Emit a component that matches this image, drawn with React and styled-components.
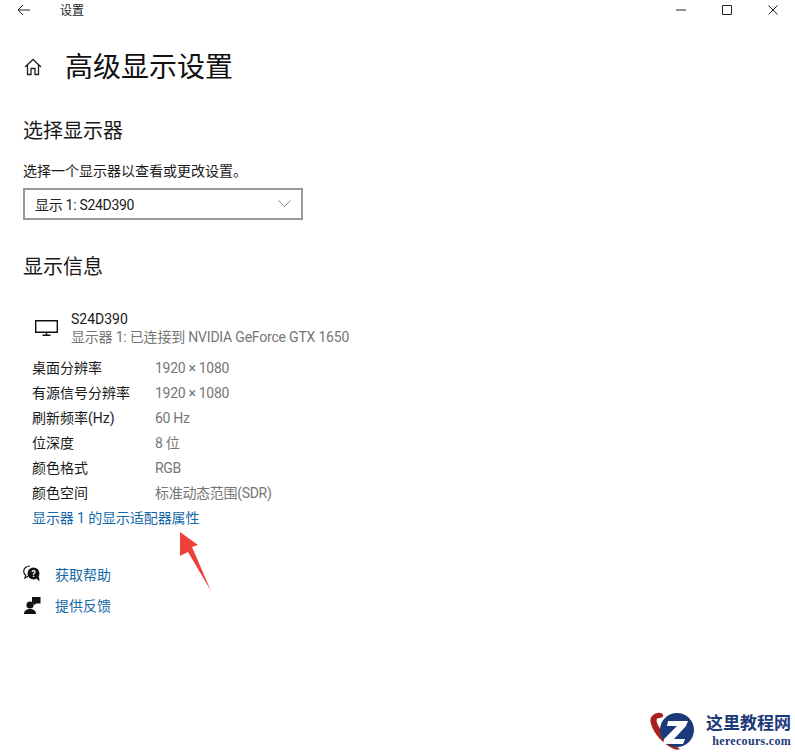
import React from 'react';
import styled, { createGlobalStyle } from 'styled-components';

const GlobalStyle = createGlobalStyle`
  html, body {
    margin: 0;
    padding: 0;
    background: #fff;
  }
  body {
    font-family: Roboto, "Noto Sans CJK SC", sans-serif;
    color: #1a1a1a;
  }
`;

const Page = styled.div`
  position: relative;
  width: 795px;
  height: 752px;
  overflow: hidden;
  background: #fff;
`;

const TitleBar = styled.header`
  display: flex;
  align-items: center;
  height: 20px;
  padding-left: 17px;
`;

const BackButton = styled.span`
  display: flex;
  width: 43px;
`;

const AppName = styled.span`
  padding-top: 2px;
  font-size: 12px;
  line-height: 18px;
  color: #222;
`;

const WindowControls = styled.div`
  display: flex;
  align-items: center;
  gap: 36px;
  margin-left: auto;
  padding-right: 17px;
`;

const Content = styled.main`
  padding: 27px 0 0 23px;
`;

const PageHeader = styled.div`
  display: flex;
  align-items: center;
  height: 40px;
  gap: 23px;
  margin-left: 1px;
`;

const PageTitle = styled.h1`
  margin: 0;
  padding-top: 2px;
  font-size: 28px;
  line-height: 38px;
  font-weight: 400;
  color: #111;
`;

const SectionTitle = styled.h2`
  margin: ${(p) => p.$top}px 0 0;
  font-size: 20px;
  line-height: 28px;
  font-weight: 400;
  color: #1a1a1a;
`;

const Hint = styled.p`
  margin: 16px 0 0;
  font-size: 14px;
  line-height: 20px;
  color: #1a1a1a;
`;

const Select = styled.div`
  box-sizing: border-box;
  display: flex;
  align-items: center;
  justify-content: space-between;
  width: 280px;
  height: 32px;
  margin-top: 7px;
  padding: 0 10px 1px;
  border: 2px solid #999;
  font-size: 14px;
  letter-spacing: -0.3px;
  color: #222;
`;

const DisplayCard = styled.div`
  display: flex;
  align-items: center;
  gap: 13px;
  margin: 29px 0 0 12px;
`;

const CardText = styled.div`
  font-size: 14px;
  line-height: 18px;
`;

const CardSub = styled.div`
  letter-spacing: -0.2px;
  color: #767676;
`;

const InfoList = styled.dl`
  margin: 10px 0 0 9px;
  font-size: 14px;
  line-height: 25px;
`;

const InfoRow = styled.div`
  display: flex;
`;

const InfoLabel = styled.dt`
  width: 123px;
  color: #1a1a1a;
`;

const InfoValue = styled.dd`
  margin: 0;
  letter-spacing: -0.3px;
  color: #767676;
`;

const AdapterLink = styled.a`
  display: block;
  margin-left: 9px;
  font-size: 14px;
  line-height: 25px;
  letter-spacing: -0.1px;
  color: #1568a8;
`;

const HelpList = styled.div`
  display: flex;
  flex-direction: column;
  gap: 11px;
  margin-top: 33px;
`;

const HelpRow = styled.div`
  display: flex;
  align-items: center;
  gap: 14px;
  height: 20px;
  font-size: 14px;
  color: #1568a8;
`;

const Annotation = styled.svg`
  position: absolute;
  left: 175px;
  top: 528px;
`;

const Watermark = styled.div`
  position: absolute;
  left: 649px;
  top: 711px;
  display: flex;
  align-items: flex-start;
  gap: 7px;
  white-space: nowrap;
`;

const MarkText = styled.div`
  display: flex;
  flex-direction: column;
  align-items: flex-end;
  font-family: "Noto Sans CJK SC", sans-serif;
`;

const MarkName = styled.span`
  font-size: 17px;
  line-height: 22px;
  font-weight: 700;
  color: #1c3a7a;
`;

const MarkUrl = styled.span`
  margin-top: 1px;
  font-family: "Liberation Serif", serif;
  font-size: 12px;
  line-height: 14px;
  font-weight: 700;
  letter-spacing: 0.3px;
  color: #1c3a7a;
`;

const infoRows = [
  ['桌面分辨率', '1920 × 1080'],
  ['有源信号分辨率', '1920 × 1080'],
  ['刷新频率(Hz)', '60 Hz'],
  ['位深度', '8 位'],
  ['颜色格式', 'RGB'],
  ['颜色空间', '标准动态范围(SDR)'],
];

function BackIcon() {
  return (
    <svg width="13" height="12" viewBox="0 0 13 12" fill="none" stroke="#222" strokeWidth="1">
      <path d="M13 6H1M6 1 1 6l5 5" />
    </svg>
  );
}

function HomeIcon() {
  return (
    <svg width="18" height="18" viewBox="0 0 18 18" fill="none" stroke="#222" strokeWidth="1.3">
      <path d="M1 9 9 1.500 17 9M3.500 7v9.500h3.500v-6h4v6h3.500V7" />
    </svg>
  );
}

function MonitorIcon() {
  return (
    <svg width="23" height="16" viewBox="0 0 23 16" fill="none" stroke="#111" strokeWidth="1.4">
      <path d="M.7.7h21.600v11.600H.7zM11.500 12.300v3M7.500 15.300h8" />
    </svg>
  );
}

function HelpIcon() {
  return (
    <svg width="18" height="18" viewBox="0 0 18 18">
      <path d="M7 1C3.400 1 .7 3.300.7 6.300c0 1.600.8 3 2 4L2 13l3.200-1.800" fill="none" stroke="#111" strokeWidth="1.2" />
      <circle cx="10.500" cy="8.500" r="6" fill="#111" />
      <path d="M13 13l3.500 3.500-.5-5z" fill="#111" />
      <text x="10.500" y="11.500" fontSize="8.500" fontWeight="700" fill="#fff" textAnchor="middle">?</text>
    </svg>
  );
}

function FeedbackIcon() {
  return (
    <svg width="18" height="18" viewBox="0 0 18 18" fill="#111">
      <circle cx="7" cy="9" r="3.600" />
      <path d="M1 18c0-3.400 2.600-5 6-5s6 1.600 6 5z" />
      <path d="M9 1h8.500v6.500H13L10.800 9.500V7.500H9z" />
    </svg>
  );
}

function LogoIcon() {
  return (
    <svg width="50" height="40" viewBox="0 0 50 40">
      <path d="M3 5c4-4 10-4 11-1 1 2-2 3-4 3-3 0-3 3-1 7 4 9 12 18 22 24-2 1-4 1-6 0C14 33 5 23 2 13 1 10 1 7 3 5z" fill="#a8201f" />
      <circle cx="28" cy="19" r="17" fill="#1c3a7a" />
      <path d="M19 10h20l-2 5-12 13h11l-2 5H14l1-5 13-13h-10z" fill="#fff" />
    </svg>
  );
}

export default function App() {
  return (
    <Page>
      <GlobalStyle />
      <TitleBar>
        <BackButton><BackIcon /></BackButton>
        <AppName>设置</AppName>
        <WindowControls>
          <svg width="10" height="10" viewBox="0 0 10 10" stroke="#222" fill="none"><path d="M0 5h10" /></svg>
          <svg width="10" height="10" viewBox="0 0 10 10" stroke="#222" fill="none"><path d="M.5.5h9v9h-9z" /></svg>
          <svg width="10" height="10" viewBox="0 0 10 10" stroke="#222" fill="none"><path d="M.5.5l9 9M9.500.5l-9 9" /></svg>
        </WindowControls>
      </TitleBar>

      <Content>
        <PageHeader>
          <HomeIcon />
          <PageTitle>高级显示设置</PageTitle>
        </PageHeader>

        <SectionTitle $top={30}>选择显示器</SectionTitle>
        <Hint>选择一个显示器以查看或更改设置。</Hint>
        <Select>
          显示 1: S24D390
          <svg width="13" height="7" viewBox="0 0 13 7" fill="none" stroke="#888"><path d="M.5.5l6 6 6-6" /></svg>
        </Select>

        <SectionTitle $top={33}>显示信息</SectionTitle>
        <DisplayCard>
          <MonitorIcon />
          <CardText>
            S24D390
            <CardSub>显示器 1: 已连接到 NVIDIA GeForce GTX 1650</CardSub>
          </CardText>
        </DisplayCard>
        <InfoList>
          {infoRows.map(([label, value]) => (
            <InfoRow key={label}>
              <InfoLabel>{label}</InfoLabel>
              <InfoValue>{value}</InfoValue>
            </InfoRow>
          ))}
        </InfoList>
        <AdapterLink>显示器 1 的显示适配器属性</AdapterLink>

        <HelpList>
          <HelpRow><HelpIcon />获取帮助</HelpRow>
          <HelpRow><FeedbackIcon />提供反馈</HelpRow>
        </HelpList>
      </Content>

      <Annotation width="38" height="66" viewBox="0 0 38 66">
        <path d="M5 4 23 17 17 19 36 63 13 24 5 28z" fill="#f0403c" />
      </Annotation>

      <Watermark>
        <LogoIcon />
        <MarkText>
          <MarkName>这里教程网</MarkName>
          <MarkUrl>herecours.com</MarkUrl>
        </MarkText>
      </Watermark>
    </Page>
  );
}
